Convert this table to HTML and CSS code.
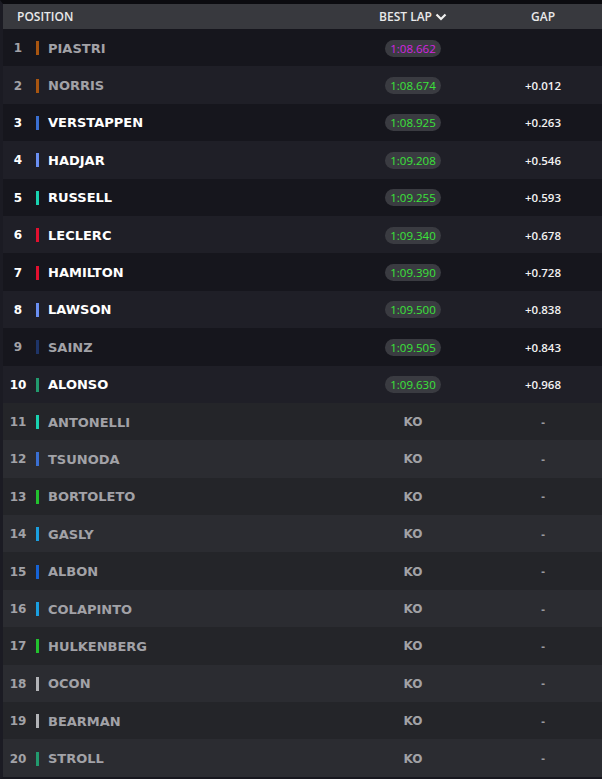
FILE: index.html
```html
<!DOCTYPE html>
<html>
<head>
<meta charset="utf-8">
<link rel="stylesheet" href="styles.css">
</head>
<body>
<div class="board">
  <div class="head">
    <div class="h-pos">POSITION</div>
    <div class="h-lap">BEST LAP <svg class="chev" width="12" height="8" viewBox="0 0 12 8"><polyline points="1.5,1.5 6,6 10.5,1.5" fill="none" stroke="#f0f0f0" stroke-width="2.2"/></svg></div>
    <div class="h-gap">GAP</div>
  </div>
  <div class="row top dim"><div class="pos">1</div><div class="bar c-mcl"></div><div class="name">PIASTRI</div><div class="lap"><span class="pill purple">1:08.662</span></div><div class="gap"></div></div>
  <div class="row top dim"><div class="pos">2</div><div class="bar c-mcl"></div><div class="name">NORRIS</div><div class="lap"><span class="pill">1:08.674</span></div><div class="gap">+0.012</div></div>
  <div class="row top"><div class="pos">3</div><div class="bar c-rb"></div><div class="name">VERSTAPPEN</div><div class="lap"><span class="pill">1:08.925</span></div><div class="gap">+0.263</div></div>
  <div class="row top"><div class="pos">4</div><div class="bar c-vcarb"></div><div class="name">HADJAR</div><div class="lap"><span class="pill">1:09.208</span></div><div class="gap">+0.546</div></div>
  <div class="row top"><div class="pos">5</div><div class="bar c-merc"></div><div class="name">RUSSELL</div><div class="lap"><span class="pill">1:09.255</span></div><div class="gap">+0.593</div></div>
  <div class="row top"><div class="pos">6</div><div class="bar c-fer"></div><div class="name">LECLERC</div><div class="lap"><span class="pill">1:09.340</span></div><div class="gap">+0.678</div></div>
  <div class="row top"><div class="pos">7</div><div class="bar c-fer"></div><div class="name">HAMILTON</div><div class="lap"><span class="pill">1:09.390</span></div><div class="gap">+0.728</div></div>
  <div class="row top"><div class="pos">8</div><div class="bar c-vcarb"></div><div class="name">LAWSON</div><div class="lap"><span class="pill">1:09.500</span></div><div class="gap">+0.838</div></div>
  <div class="row top dim"><div class="pos">9</div><div class="bar c-wil-dim"></div><div class="name">SAINZ</div><div class="lap"><span class="pill">1:09.505</span></div><div class="gap">+0.843</div></div>
  <div class="row top"><div class="pos">10</div><div class="bar c-am"></div><div class="name">ALONSO</div><div class="lap"><span class="pill">1:09.630</span></div><div class="gap">+0.968</div></div>
  <div class="row ko"><div class="pos">11</div><div class="bar c-merc"></div><div class="name">ANTONELLI</div><div class="lap">KO</div><div class="gap">-</div></div>
  <div class="row ko"><div class="pos">12</div><div class="bar c-rb"></div><div class="name">TSUNODA</div><div class="lap">KO</div><div class="gap">-</div></div>
  <div class="row ko"><div class="pos">13</div><div class="bar c-sau"></div><div class="name">BORTOLETO</div><div class="lap">KO</div><div class="gap">-</div></div>
  <div class="row ko"><div class="pos">14</div><div class="bar c-alp"></div><div class="name">GASLY</div><div class="lap">KO</div><div class="gap">-</div></div>
  <div class="row ko"><div class="pos">15</div><div class="bar c-wil"></div><div class="name">ALBON</div><div class="lap">KO</div><div class="gap">-</div></div>
  <div class="row ko"><div class="pos">16</div><div class="bar c-alp"></div><div class="name">COLAPINTO</div><div class="lap">KO</div><div class="gap">-</div></div>
  <div class="row ko"><div class="pos">17</div><div class="bar c-sau"></div><div class="name">HULKENBERG</div><div class="lap">KO</div><div class="gap">-</div></div>
  <div class="row ko"><div class="pos">18</div><div class="bar c-haas"></div><div class="name">OCON</div><div class="lap">KO</div><div class="gap">-</div></div>
  <div class="row ko"><div class="pos">19</div><div class="bar c-haas"></div><div class="name">BEARMAN</div><div class="lap">KO</div><div class="gap">-</div></div>
  <div class="row ko"><div class="pos">20</div><div class="bar c-am"></div><div class="name">STROLL</div><div class="lap">KO</div><div class="gap">-</div></div>
</div>
</body>
</html>
```

FILE: styles.css
```css
html, body {
  margin: 0;
  padding: 0;
  background: #16161d;
}
.board {
  width: 599px;
  height: 773px;
  border-top: 4px solid #0b0b0f;
  border-left: 3px solid #1b1b23;
  border-bottom: 2px solid #17171e;
  display: flex;
  flex-direction: column;
  overflow: hidden;
}
.head {
  height: 25px;
  flex: none;
  background: #38393e;
  display: flex;
  align-items: center;
  font-family: "Open Sans", sans-serif;
  font-size: 12px;
  font-weight: 600;
  color: #e9e9ea;
}
.h-pos {
  flex: 1;
  padding-left: 14px;
}
.h-lap {
  width: 142px;
  display: flex;
  align-items: center;
  justify-content: center;
  gap: 3px;
}
.chev {
  display: block;
  margin-top: 1px;
}
.h-gap {
  width: 118px;
  text-align: center;
}
.row {
  box-sizing: border-box;
  height: 37.4px;
  padding-top: 1px;
  flex: none;
  display: flex;
  align-items: center;
  color: #ffffff;
}
.row.top:nth-child(odd) {
  background: #1f1f27;
}
.row.top:nth-child(even) {
  background: #16161d;
}
.row.ko:nth-child(odd) {
  background: #2b2c31;
}
.row.ko:nth-child(even) {
  background: #242529;
}
.pos {
  width: 30px;
  text-align: center;
  font-family: "DejaVu Sans", sans-serif;
  font-weight: bold;
  font-size: 12px;
}
.bar {
  width: 3px;
  height: 14px;
  margin: 0 9px 0 3px;
}
.name {
  flex: 1;
  font-family: "DejaVu Sans", sans-serif;
  font-weight: bold;
  font-size: 13px;
}
.dim .pos, .dim .name, .ko .pos, .ko .name {
  color: #a2a2a7;
}
.lap {
  width: 142px;
  display: flex;
  justify-content: center;
  align-items: center;
}
.ko .lap {
  font-family: "DejaVu Sans", sans-serif;
  font-weight: bold;
  font-size: 12px;
  color: #a2a2a6;
}
.pill {
  display: inline-block;
  height: 17px;
  line-height: 17px;
  padding: 0 5px;
  border-radius: 9px;
  background: #3a3b41;
  font-family: "Open Sans", sans-serif;
  font-size: 11.5px;
  font-weight: 500;
  color: #3ae43a;
}
.pill.purple {
  color: #d424e0;
}
.gap {
  width: 118px;
  text-align: center;
  font-family: "Open Sans", sans-serif;
  font-size: 11.5px;
  font-weight: 600;
  color: #f2f2f2;
}
.ko .gap {
  color: #9a9a9e;
  font-weight: 700;
}
.c-mcl { background: #a85510; }
.c-rb { background: #3a6fd2; }
.c-vcarb { background: #6a8ff2; }
.c-merc { background: #19d2b0; }
.c-fer { background: #e2102f; }
.c-wil-dim { background: #1e3468; }
.c-wil { background: #1663d6; }
.c-am { background: #229a6e; }
.c-sau { background: #22c22e; }
.c-alp { background: #1a9fe0; }
.c-haas { background: #b2b3b7; }
```
